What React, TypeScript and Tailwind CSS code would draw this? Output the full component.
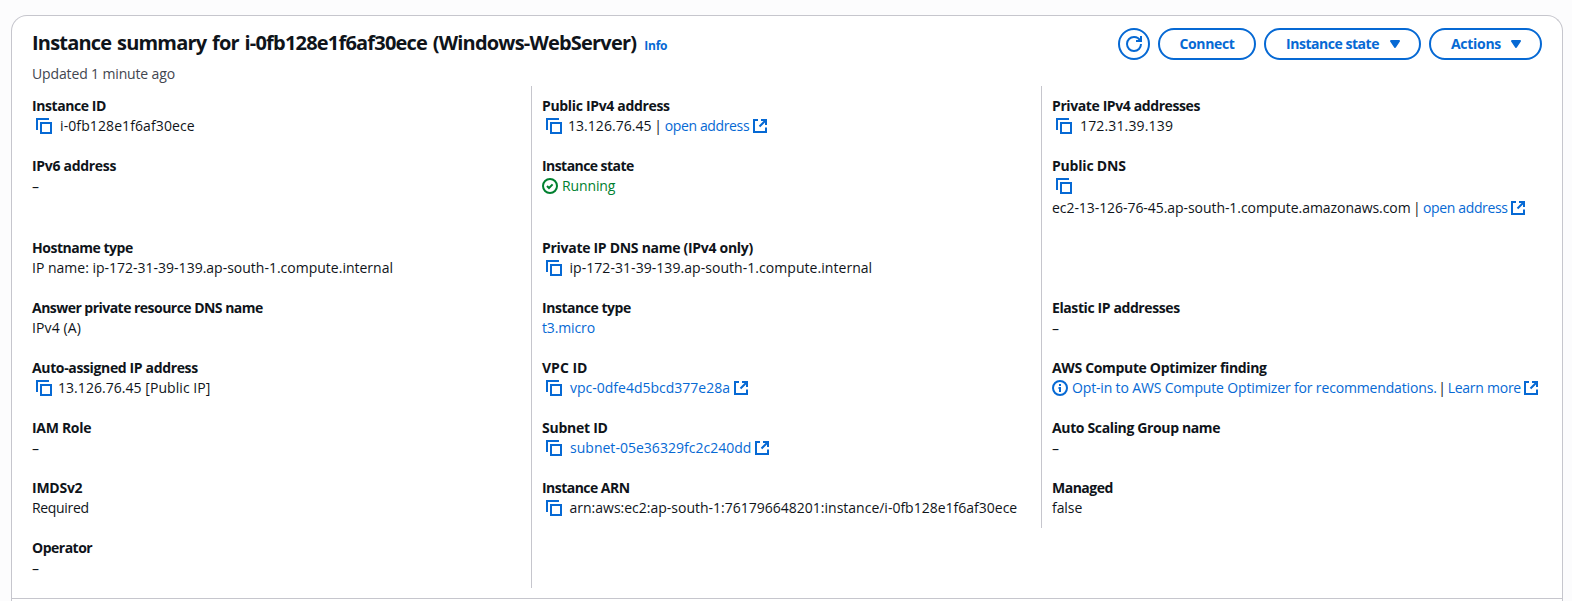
import React from "react";

const Copy = () => (
  <svg className="ml-1 size-4 shrink-0 text-[#0669d4]" viewBox="0 0 16 16" fill="none" stroke="currentColor" strokeWidth="2">
    <path d="M1 12V1h12" />
    <path d="M5 5h10v10H5z" />
  </svg>
);

const External = () => (
  <svg className="ml-[3.5px] size-3.5 shrink-0 text-[#0669d4]" viewBox="0 0 14 14" fill="none" stroke="currentColor" strokeWidth="2">
    <path d="M5 1H1v12h12V8.5" />
    <path d="M8 1h5v5M13 1 6.5 7.5" />
  </svg>
);

const Check = () => (
  <svg className="mr-1 size-4 shrink-0" viewBox="0 0 16 16" fill="none" stroke="currentColor" strokeWidth="2">
    <circle cx="8" cy="8" r="7" />
    <path d="m5 8 2 2 3.6-3.6" />
  </svg>
);

const InfoIcon = () => (
  <svg className="mr-1 size-4 shrink-0 text-[#0669d4]" viewBox="0 0 16 16" fill="none" stroke="currentColor" strokeWidth="2">
    <circle cx="8" cy="8" r="7" />
    <path d="M8 4v2M8 12V8H6.5" />
  </svg>
);

const Refresh = () => (
  <svg className="size-4" viewBox="0 0 16 16" fill="none" stroke="currentColor" strokeWidth="2">
    <path d="M10 5h5V0" />
    <path d="M15 8a6.957 6.957 0 0 1-7 7 6.957 6.957 0 0 1-7-7 6.957 6.957 0 0 1 7-7 6.87 6.87 0 0 1 6.3 4" />
  </svg>
);

const Caret = () => (
  <svg className="size-4" viewBox="0 0 16 16" fill="currentColor" stroke="currentColor" strokeWidth="2" strokeLinejoin="round">
    <path d="M4 5h8l-4 6-4-6z" />
  </svg>
);

const Dash = () => <span className="h-5 pt-px tracking-normal">–</span>;

const link = "text-[#0669d4]";

function Field({ label, tracking = "", side = false, children }: {
  label?: string;
  tracking?: string;
  side?: boolean;
  children?: React.ReactNode;
}) {
  return (
    <div className={side ? "border-l border-[#c6c6cd] py-2.5 pl-2.5" : "py-2.5 pl-2.5"}>
      {label && <div className={"font-bold " + tracking}>{label}</div>}
      {children && <div className="flex items-center">{children}</div>}
    </div>
  );
}

const pill = "flex h-8 items-center rounded-full border-2 border-[#0669d4] font-bold text-[#0669d4]";

export default function App() {
  return (
    <div className="h-[601px] overflow-hidden bg-[#fcfcfd] pt-[15px] pl-[11px] font-['Open_Sans',sans-serif] text-sm leading-5 whitespace-pre text-[#0f141a]">
      <section className="h-[586px] w-[1552px] rounded-t-2xl border border-b-0 border-[#c6c6cd] bg-white">
        <header className="flex h-[70px] justify-between pr-5 pl-5">
          <div>
            <div className="flex h-12 items-baseline pt-[15px]">
              <h1 className="text-xl leading-6 font-bold tracking-[-0.8px] [word-spacing:1.3px]">Instance summary for i-0fb128e1f6af30ece (Windows-WebServer)</h1>
              <a className="ml-2 text-xs leading-4 font-bold tracking-[-0.2px] text-[#0669d4]">Info</a>
            </div>
            <p className="tracking-[-0.14px] text-[#424650]">Updated 1 minute ago</p>
          </div>
          <div className="flex gap-2 pt-3">
            <button className="flex size-8 items-center justify-center rounded-full border-2 border-[#0669d4] text-[#0669d4]"><Refresh /></button>
            <button className={pill + " w-[98px] justify-center tracking-[-0.36px]"}>Connect</button>
            <button className={pill + " w-[157px] justify-between pr-4 pl-5 tracking-[-0.46px]"}>Instance state<Caret /></button>
            <button className={pill + " w-[113px] justify-between pr-4 pl-5 tracking-[-0.29px]"}>Actions<Caret /></button>
          </div>
        </header>

        <div className="grid grid-cols-[509px_510px_510px] pl-2.5">
          <Field label="Instance ID" tracking="tracking-[-0.42px]"><Copy /><span className="ml-[8px] tracking-[0.1px]">i-0fb128e1f6af30ece</span></Field>
          <Field side label="Public IPv4 address" tracking="tracking-[-0.33px]">
            <Copy /><span className="ml-1.5 tracking-[0.04px] [word-spacing:-1px]">13.126.76.45 | </span>
            <a className={link + " tracking-[-0.36px]"}>open address</a><External />
          </Field>
          <Field side label="Private IPv4 addresses" tracking="tracking-[-0.4px]"><Copy /><span className="ml-2 tracking-[0.15px]">172.31.39.139</span></Field>

          <Field label="IPv6 address" tracking="tracking-[-0.31px]"><Dash /></Field>
          <Field side label="Instance state" tracking="tracking-[-0.56px]"><span className="flex items-center tracking-[-0.12px] text-[#00802f]"><Check />Running</span></Field>
          <Field side label="Public DNS" tracking="tracking-[-0.2px]">
            <div>
              <div className="flex h-[22px] pt-0.5"><Copy /></div>
              <div className="flex items-center">
                <span className="tracking-[-0.06px] [word-spacing:-1.2px]">ec2-13-126-76-45.ap-south-1.compute.amazonaws.com | </span>
                <a className={link + " tracking-[-0.36px]"}>open address</a><External />
              </div>
            </div>
          </Field>

          <Field label="Hostname type" tracking="tracking-[-0.47px]"><span>IP name: ip-172-31-39-139.ap-south-1.compute.internal</span></Field>
          <Field side label="Private IP DNS name (IPv4 only)" tracking="tracking-[-0.29px]"><Copy /><span className="ml-[7.5px] tracking-[0.05px]">ip-172-31-39-139.ap-south-1.compute.internal</span></Field>
          <Field side />

          <Field label="Answer private resource DNS name" tracking="tracking-[-0.53px]"><span className="tracking-[0.1px]">IPv4 (A)</span></Field>
          <Field side label="Instance type" tracking="tracking-[-0.46px]"><a className={link + " tracking-[-0.13px]"}>t3.micro</a></Field>
          <Field side label="Elastic IP addresses" tracking="tracking-[-0.4px]"><Dash /></Field>

          <Field label="Auto-assigned IP address" tracking="tracking-[-0.36px]"><Copy /><span className="ml-1.5 tracking-[0.05px]">13.126.76.45 [Public IP]</span></Field>
          <Field side label="VPC ID" tracking="tracking-[0px]"><Copy /><a className={link + " ml-2"}>vpc-0dfe4d5bcd377e28a</a><External /></Field>
          <Field side label="AWS Compute Optimizer finding" tracking="tracking-[-0.34px]">
            <InfoIcon /><a className={link + " tracking-[-0.155px]"}>Opt-in to AWS Compute Optimizer for recommendations.</a>
            <span className="w-[11px] text-center">|</span>
            <a className={link + " tracking-[-0.26px]"}>Learn more</a><External />
          </Field>

          <Field label="IAM Role" tracking="tracking-[-0.3px]"><Dash /></Field>
          <Field side label="Subnet ID" tracking="tracking-[-0.26px]"><Copy /><a className={link + " ml-[8px] tracking-[0.02px]"}>subnet-05e36329fc2c240dd</a><External /></Field>
          <Field side label="Auto Scaling Group name" tracking="tracking-[-0.36px]"><Dash /></Field>

          <Field label="IMDSv2" tracking="tracking-[-0.25px]"><span className="tracking-[-0.32px]">Required</span></Field>
          <Field side label="Instance ARN" tracking="tracking-[-0.53px]"><Copy /><span className="ml-[7.5px]">arn:aws:ec2:ap-south-1:761796648201:instance/i-0fb128e1f6af30ece</span></Field>
          <Field side label="Managed" tracking="tracking-[-0.5px]"><span className="tracking-[-0.06px]">false</span></Field>

          <Field label="Operator" tracking="tracking-[-0.5px]"><Dash /></Field>
          <Field side />
        </div>
        <div className="mt-2.5 border-t border-[#c6c6cd]" />
      </section>
    </div>
  );
}
